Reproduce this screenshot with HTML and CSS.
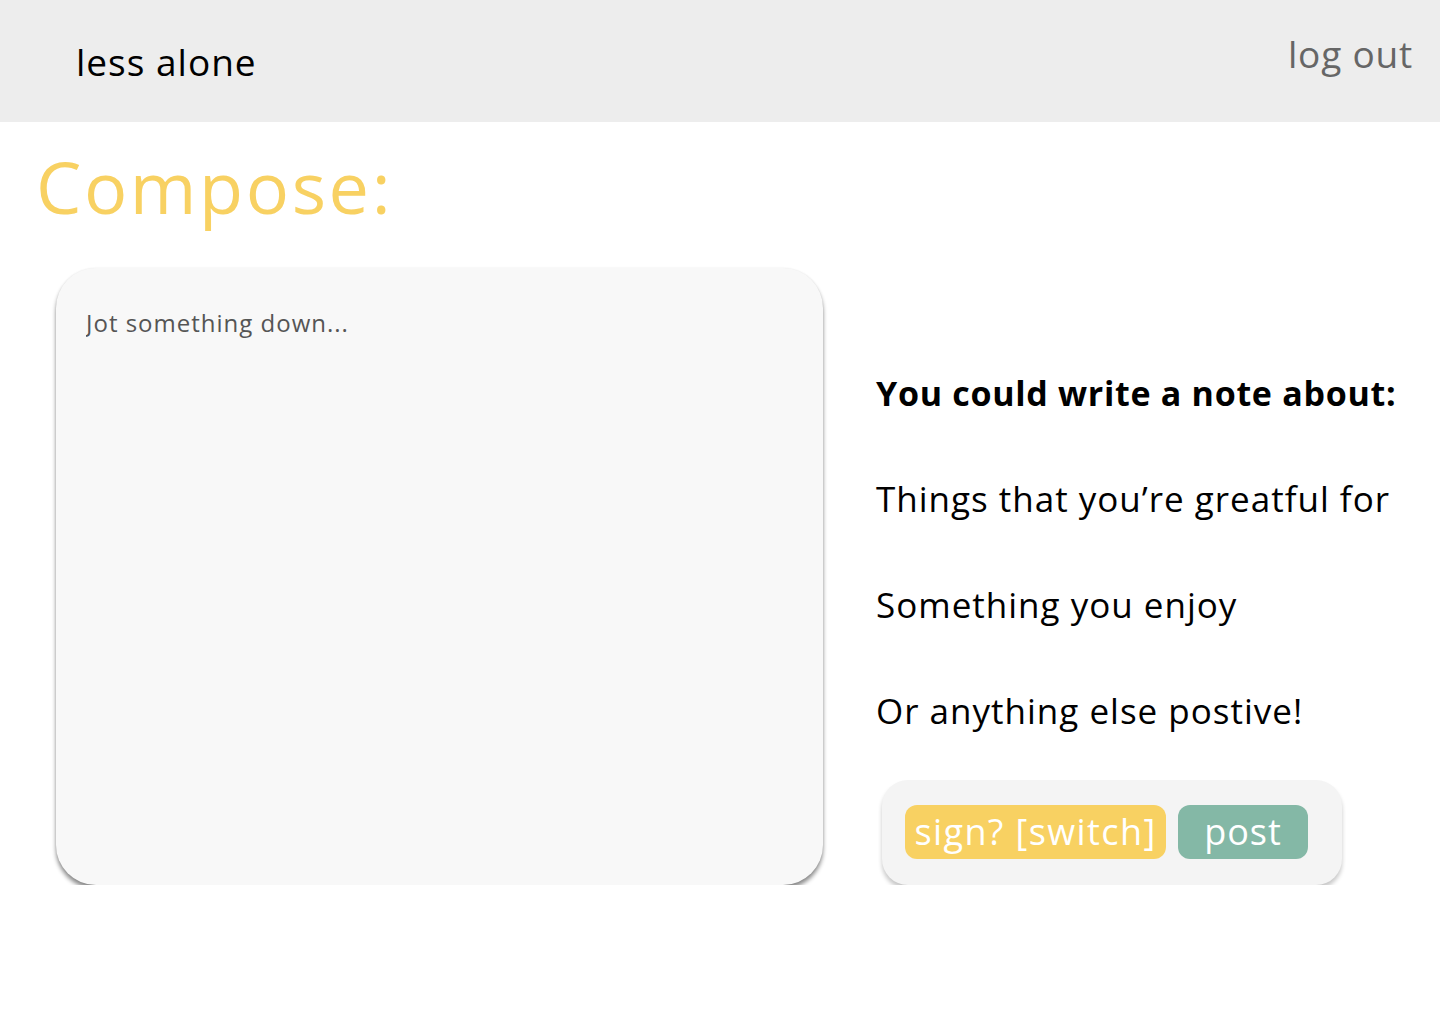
FILE: index.html
```html
<!DOCTYPE html>
<html lang="en">
<head>
<meta charset="utf-8">
<title>less alone - Compose</title>
<link rel="stylesheet" href="styles.css">
</head>
<body>
<header class="topbar">
  <div class="brand">less alone</div>
  <a class="logout" href="#">log out</a>
</header>
<main class="page">
  <h1 class="title">Compose:</h1>
  <div class="compose-row">
    <div class="note-card">
      <textarea class="note-input" placeholder="Jot something down..."></textarea>
    </div>
    <aside class="ideas">
      <p class="ideas-head">You could write a note about:</p>
      <p class="idea">Things that you’re greatful for</p>
      <p class="idea">Something you enjoy</p>
      <p class="idea">Or anything else postive!</p>
      <div class="actions">
        <button class="btn btn-sign">sign? [switch]</button>
        <button class="btn btn-post">post</button>
      </div>
    </aside>
  </div>
</main>
</body>
</html>
```

FILE: styles.css
```css
* { box-sizing: border-box; }
html, body { margin: 0; padding: 0; background: #ffffff; }
body {
  font-family: "Open Sans", "Noto Sans", sans-serif;
  color: #000;
}
.topbar {
  height: 122px;
  background: #ededed;
  display: flex;
  justify-content: space-between;
  align-items: flex-start;
}
.brand {
  padding: 37px 0 0 76px;
  font-size: 37px;
  line-height: 50px;
  letter-spacing: 1px;
  color: #000;
}
.logout {
  padding: 29px 27px 0 0;
  font-size: 37px;
  line-height: 50px;
  letter-spacing: 0.8px;
  color: #666666;
  text-decoration: none;
}
.page {
  padding: 0 0 0 36px;
}
.title {
  margin: 0;
  padding-top: 4px;
  font-weight: 400;
  font-size: 72px;
  line-height: 120px;
  color: #f8d162;
  letter-spacing: 2.6px;
}
.compose-row {
  display: flex;
  align-items: stretch;
  margin-top: 22px;
  padding-left: 20px;
}
.note-card {
  width: 767px;
  height: 617px;
  background: #f8f8f8;
  border-radius: 40px;
  box-shadow: 0 4px 4px rgba(0,0,0,0.45), 0 0 2px rgba(0,0,0,0.08);
  padding: 38px 30px;
  flex-shrink: 0;
}
.note-input {
  width: 100%;
  height: 100%;
  border: none;
  background: transparent;
  resize: none;
  outline: none;
  font-family: inherit;
  font-size: 24px;
  letter-spacing: 1px;
  color: #555;
  padding: 0;
}
.note-input::placeholder { color: #555; }
.ideas {
  margin-left: 53px;
  display: flex;
  flex-direction: column;
  justify-content: flex-end;
}
.ideas p {
  margin: 0;
  height: 106px;
  line-height: 106px;
  font-size: 35px;
  letter-spacing: 1px;
  white-space: nowrap;
}
.ideas .ideas-head {
  font-weight: 700;
  font-size: 34px;
  letter-spacing: 0.7px;
}
.actions {
  margin-top: 16px;
  margin-left: 6px;
  width: 460px;
  height: 105px;
  background: #f4f4f4;
  border-radius: 26px;
  box-shadow: 0 4px 4px rgba(0,0,0,0.22);
  display: flex;
  align-items: flex-start;
  gap: 12px;
  padding: 25px 23px;
}
.btn {
  border: none;
  height: 54px;
  border-radius: 12px;
  color: #ffffff;
  font-family: inherit;
  font-size: 36px;
  letter-spacing: 1.4px;
  line-height: 54px;
  padding: 0;
  cursor: pointer;
}
.btn-sign { background: #f8d162; width: 261px; }
.btn-post { background: #84b8a6; width: 130px; letter-spacing: 1px; }
```
